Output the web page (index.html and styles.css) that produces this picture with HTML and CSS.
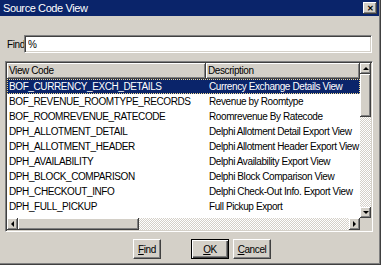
FILE: index.html
```html
<!DOCTYPE html>
<html lang="en">
  <head>
    <meta charset="UTF-8" />
    <title>Source Code View</title>
    <link rel="stylesheet" href="styles.css">
  </head>
  <body>
    <div class="window">
      <div class="titlebar">
        <span class="title">Source Code View</span>
        <span class="close">&#x2715;</span>
      </div>

      <div class="content">
        <div class="find-row">
          <label for="find">Find</label>
          <input id="find" type="text" value="%" />
        </div>

        <div class="list">
          <div class="list-main">
            <div class="list-head">
              <div class="col-code">View Code</div>
              <div class="col-desc">Description</div>
            </div>
            <div class="list-row selected">
              <div class="col-code">BOF_CURRENCY_EXCH_DETAILS</div>
              <div class="col-desc">Currency Exchange Details View</div>
            </div>
            <div class="list-row">
              <div class="col-code">BOF_REVENUE_ROOMTYPE_RECORDS</div>
              <div class="col-desc">Revenue by Roomtype</div>
            </div>
            <div class="list-row">
              <div class="col-code">BOF_ROOMREVENUE_RATECODE</div>
              <div class="col-desc">Roomrevenue By Ratecode</div>
            </div>
            <div class="list-row">
              <div class="col-code">DPH_ALLOTMENT_DETAIL</div>
              <div class="col-desc">Delphi Allotment Detail Export View</div>
            </div>
            <div class="list-row">
              <div class="col-code">DPH_ALLOTMENT_HEADER</div>
              <div class="col-desc">Delphi Allotment Header Export View</div>
            </div>
            <div class="list-row">
              <div class="col-code">DPH_AVAILABILITY</div>
              <div class="col-desc">Delphi Availability Export View</div>
            </div>
            <div class="list-row">
              <div class="col-code">DPH_BLOCK_COMPARISON</div>
              <div class="col-desc">Delphi Block Comparison View</div>
            </div>
            <div class="list-row">
              <div class="col-code">DPH_CHECKOUT_INFO</div>
              <div class="col-desc">Delphi Check-Out Info. Export View</div>
            </div>
            <div class="list-row">
              <div class="col-code">DPH_FULL_PICKUP</div>
              <div class="col-desc">Full Pickup Export</div>
            </div>
          </div>

          <div class="vscroll">
            <div class="sbtn"><span class="arrow up"></span></div>
            <div class="track vtrack"><div class="thumb vthumb"></div></div>
            <div class="sbtn"><span class="arrow down"></span></div>
          </div>

          <div class="hscroll">
            <div class="sbtn"><span class="arrow left"></span></div>
            <div class="track htrack"><div class="thumb hthumb"></div></div>
            <div class="sbtn"><span class="arrow right"></span></div>
          </div>

          <div class="corner"></div>
        </div>

        <div class="buttons">
          <button class="btn btn-find"><u>F</u>ind</button>
          <button class="btn btn-ok default"><u>O</u>K</button>
          <button class="btn btn-cancel"><u>C</u>ancel</button>
        </div>
      </div>
    </div>
  </body>
</html>
```

FILE: styles.css
```css
body {
  margin: 0;
  background: #d4d0c8;
  font-family: "Liberation Sans", Arial, sans-serif;
  font-size: 10px;
  letter-spacing: -0.4px;
  color: #000;
}

.window {
  width: 381px;
  height: 265px;
  box-sizing: border-box;
  background: #d4d0c8;
  border-right: 1px solid #404040;
  border-bottom: 1px solid #404040;
  box-shadow: inset -1px -1px #808080;
}

.titlebar {
  height: 16px;
  margin-right: 1px;
  padding: 0 2px 0 3px;
  background: #0a246a;
  color: #fff;
  display: flex;
  align-items: center;
  justify-content: space-between;
  font-size: 11px;
}

.close {
  width: 14px;
  height: 12px;
  box-sizing: border-box;
  background: #d4d0c8;
  color: #000;
  font-size: 8px;
  font-weight: bold;
  letter-spacing: 0;
  display: flex;
  align-items: center;
  justify-content: center;
  box-shadow: inset -1px -1px #404040, inset 1px 1px #fff, inset -2px -2px #808080;
}

.content {
  padding: 0 7px 0 5px;
}

.find-row {
  display: flex;
  align-items: center;
  margin-top: 19px;
  padding-left: 2px;
}

.find-row label {
  width: 17px;
}

.find-row input {
  width: 348px;
  height: 18px;
  box-sizing: border-box;
  margin: 0;
  padding: 0 3px;
  border: 1px solid;
  border-color: #808080 #fff #fff #808080;
  box-shadow: inset 1px 1px #404040, inset -1px -1px #d4d0c8;
  font: inherit;
  letter-spacing: inherit;
  outline: none;
}

.list {
  margin-top: 8px;
  height: 171px;
  box-sizing: border-box;
  border: 1px solid;
  border-color: #808080 #fff #fff #808080;
  padding: 1px;
  box-shadow: inset 1px 1px #404040, inset -1px -1px #d4d0c8;
  display: grid;
  grid-template-columns: 353px 11px;
  grid-template-rows: 155px 12px;
}

.list-main {
  background: #fff;
  overflow: hidden;
}

.list-head,
.list-row {
  display: flex;
  white-space: nowrap;
}

.list-head {
  height: 16px;
}

.list-head > div {
  background: #d4d0c8;
  box-sizing: border-box;
  padding: 2px 0 0 2px;
  box-shadow: inset -1px -1px #404040, inset 1px 1px #fff, inset -2px -2px #808080;
}

.list-row {
  height: 15px;
  align-items: center;
}

.col-code {
  width: 199px;
  padding-left: 2px;
  box-sizing: border-box;
}

.col-desc {
  flex: 1;
  padding-left: 3px;
}

.list-row.selected {
  background: #0a246a;
  color: #fff;
  outline: 1px dotted #f0d890;
  outline-offset: -1px;
}

.vscroll {
  display: flex;
  flex-direction: column;
}

.hscroll {
  display: flex;
}

.sbtn {
  width: 11px;
  height: 11px;
  flex: none;
  background: #d4d0c8;
  box-shadow: inset -1px -1px #404040, inset 1px 1px #fff, inset -2px -2px #808080;
  display: flex;
  align-items: center;
  justify-content: center;
}

.hscroll .sbtn {
  height: 12px;
}

.track {
  flex: 1;
  background-color: #fff;
  background-image: conic-gradient(#d4d0c8 25%, #fff 0 50%, #d4d0c8 0 75%, #fff 0);
  background-size: 2px 2px;
}

.thumb {
  background: #d4d0c8;
  box-shadow: inset -1px -1px #404040, inset 1px 1px #fff, inset -2px -2px #808080;
}

.vthumb {
  height: 43px;
}

.hthumb {
  width: 121px;
  height: 100%;
}

.arrow {
  width: 0;
  height: 0;
  border: 3px solid transparent;
}

.arrow.up {
  border-bottom-color: #000;
  border-top-width: 0;
}

.arrow.down {
  border-top-color: #000;
  border-bottom-width: 0;
}

.arrow.left {
  border-right-color: #000;
  border-left-width: 0;
}

.arrow.right {
  border-left-color: #000;
  border-right-width: 0;
}

.corner {
  background: #d4d0c8;
}

.buttons {
  display: flex;
  gap: 4px;
  margin-top: 7px;
  padding-left: 128px;
}

.btn {
  height: 20px;
  width: 38px;
  margin: 0;
  padding: 0;
  background: #d4d0c8;
  border: 1px solid;
  border-color: #fff #404040 #404040 #fff;
  box-shadow: inset -1px -1px #808080;
  font: inherit;
  letter-spacing: inherit;
  color: #000;
}

.btn-find {
  width: 28px;
  margin-right: 26px;
}

.btn.default {
  border: 1px solid #000;
  box-shadow: inset 1px 1px #fff, inset -1px -1px #404040, inset -2px -2px #808080;
}
```
